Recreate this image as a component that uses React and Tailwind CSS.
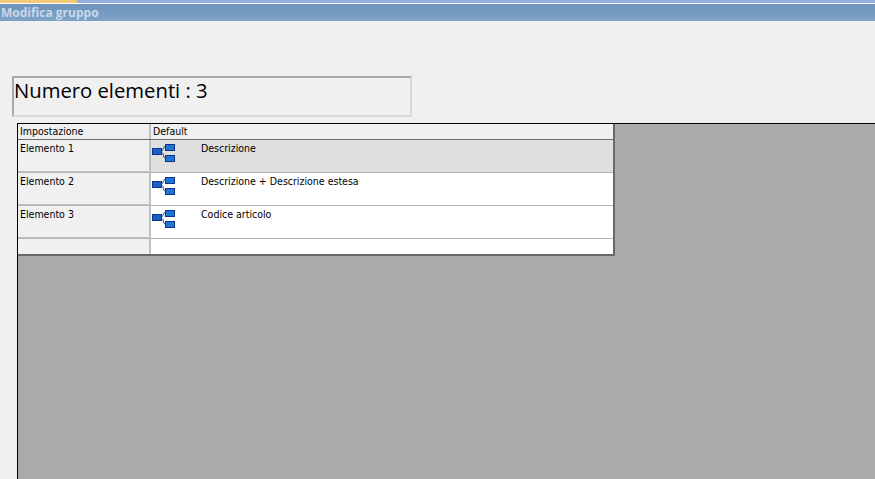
import React from "react";

const rows = [
  { name: "Elemento 1", value: "Descrizione", selected: true },
  { name: "Elemento 2", value: "Descrizione + Descrizione estesa" },
  { name: "Elemento 3", value: "Codice articolo" },
];

const TreeIcon = () => (
  <svg width="24" height="20" viewBox="0 0 24 20" className="block mt-[3px]">
    <path d="M10 7.5 C12 7 10.5 4 13 3.5 M10 9.5 C12 10 10.5 14.5 13 15" fill="none" stroke="#24406e" strokeWidth="1" />
    <rect x="0.5" y="5.5" width="9" height="6" fill="#1762c4" stroke="#0d3488" />
    <rect x="13.5" y="1.5" width="9" height="6" fill="#1f74d4" stroke="#0d3488" />
    <rect x="13.5" y="12.5" width="9" height="6" fill="#1f74d4" stroke="#0d3488" />
  </svg>
);

const App = () => {
  return (
    <div className="w-[875px] h-[479px] overflow-hidden flex flex-col bg-[#f0f0f0] font-['DejaVu_Sans_Condensed','DejaVu_Sans',sans-serif] text-black">
      {/* tab strip */}
      <div className="h-[3px] shrink-0 flex bg-[#8fb0e0]">
        <div className="w-[77px] bg-[#f5c873]"></div>
      </div>
      <div className="h-px shrink-0 bg-white"></div>
      <div className="h-[17px] shrink-0 bg-gradient-to-b from-[#6d93bb] to-[#7fa3c8] px-px text-xs leading-[17px] font-bold text-[#c9d8e8] font-['Open_Sans',sans-serif]">
        Modifica gruppo
      </div>

      <div className="mt-[55px] ml-3 w-[400px] h-[41px] shrink-0 border-2 border-[#d8d8d8] border-t-[#a8a8a8] border-l-[#a8a8a8] text-[20.25px] leading-[24px] font-['Open_Sans',sans-serif]">
        Numero elementi : 3
      </div>

      <div className="mt-1.5 ml-[17px] flex-1 border-l border-t border-black bg-[#aaaaaa]">
        <div className="w-[597px] border-r-2 border-b-2 border-[#696969] bg-white text-[10.5px] leading-[15px]">
          <div className="flex h-[16px] border-b border-[#696969] bg-[#f0f0f0]">
            <div className="w-[133px] pl-0.5 border-r-2 border-[#c0c0c0]">Impostazione</div>
            <div className="pl-0.5">Default</div>
          </div>
          {rows.map((row) => (
            <div key={row.name} className="flex h-[33px] border-b border-[#b4b4b4]">
              <div className="w-[133px] pl-0.5 pt-px border-r-2 border-b border-[#c0c0c0] bg-[#f0f0f0]">{row.name}</div>
              <div className={"flex-1 flex pl-px " + (row.selected ? "bg-[#dfdfdf]" : "bg-white")}>
                <TreeIcon />
                <div className="ml-[25px] pt-px">{row.value}</div>
              </div>
            </div>
          ))}
          <div className="flex h-[15px]">
            <div className="w-[133px] border-r-2 border-[#c0c0c0] bg-[#f0f0f0]"></div>
          </div>
        </div>
      </div>
    </div>
  );
};

export default App;
